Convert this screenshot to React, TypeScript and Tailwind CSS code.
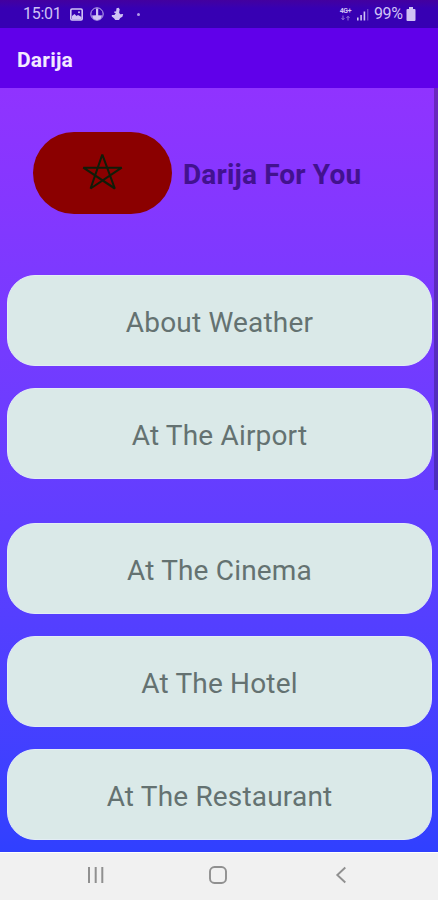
interface TopicButtonProps {
  label: string;
}

const topicGroups = [
  ['About Weather', 'At The Airport'],
  ['At The Cinema', 'At The Hotel', 'At The Restaurant'],
];

function StatusBar() {
  return (
    <div className="flex h-[28px] items-center bg-gradient-to-b from-[#43009f] to-[#3700b3] to-30% pl-[23px] pr-[22px] text-[#cfc2f4]">
      <span className="w-[38px] whitespace-nowrap text-[16px] leading-none tracking-[-0.3px]">15:01</span>
      {/* Notification icons */}
      <svg className="ml-[9px] h-[13px] w-[13px]" viewBox="0 0 13 13" fill="none">
        <rect x="0.8" y="1" width="11.4" height="11" rx="1.2" stroke="currentColor" strokeWidth="1.6" />
        <path d="M2 11.5V8l2.5-2 2 2L8 7l3.5 2v2.5z" fill="currentColor" />
        <circle cx="9" cy="4.2" r="1" fill="currentColor" />
      </svg>
      <svg className="ml-[7px] h-[14px] w-[14px]" viewBox="0 0 14 14" fill="none">
        <circle cx="7" cy="7" r="6.2" stroke="currentColor" strokeWidth="0.9" />
        <path d="M6 1.5h2.2v6.8l4 .3L10.5 12 7 13.2 3.5 12 1.8 8.6l4.2-.3z" fill="currentColor" />
      </svg>
      <svg className="ml-[7px] h-[14px] w-[13px]" viewBox="0 0 13 14" fill="currentColor">
        <path d="M5.5 1.2 7.6.7l1.1 1.5-.6 3.5 1.1 1.6 3-.3-.8 2.8-2.2 1.2L8 13H4.3L3 11.2.8 9.4V8h2.6l1.4-1.7-1.8-.8.7-1.3 1.4.2z" />
      </svg>
      <span className="ml-[13px] h-[3px] w-[3px] rounded-full bg-current opacity-80" />

      {/* Network, signal and battery */}
      <div className="ml-auto flex items-center">
        <div className="flex w-[13px] flex-col items-center">
          <span className="text-[7px] font-bold leading-[7px] tracking-[-0.3px]">4G+</span>
          <svg className="h-[6px] w-[9px] opacity-60" viewBox="0 0 9 6" fill="none" stroke="currentColor">
            <path d="M2 .5v4M.5 3 2 4.8 3.5 3M7 5.5v-4M5.5 3 7 1.2 8.5 3" />
          </svg>
        </div>
        <svg className="ml-[5px] h-[13px] w-[12px]" viewBox="0 0 12 13" fill="currentColor">
          <rect x="0" y="9.5" width="1.6" height="3" />
          <rect x="3.3" y="7" width="1.6" height="5.5" />
          <rect x="6.6" y="3.5" width="1.6" height="9" />
          <rect x="10" y="1" width="1.4" height="11.5" opacity="0.35" />
        </svg>
        <span className="ml-[5px] w-[29px] whitespace-nowrap text-[16px] leading-none tracking-[-0.4px]">99%</span>
        <svg className="ml-[3px] h-[14px] w-[10px]" viewBox="0 0 10 14" fill="currentColor">
          <path d="M3 0h4v2h1.5a1 1 0 0 1 1 1v10a1 1 0 0 1-1 1h-7a1 1 0 0 1-1-1V3a1 1 0 0 1 1-1H3z" />
        </svg>
      </div>
    </div>
  );
}

function Banner() {
  return (
    <div className="flex items-center gap-[11px] pl-[26px]">
      <div className="flex h-[82px] w-[139px] items-center justify-center rounded-full bg-[#8b0000]">
        <svg className="h-[42px] w-[44px]" viewBox="0 0 44 42" fill="none" stroke="#101c08" strokeWidth="2.1" strokeLinejoin="bevel">
          <path d="M21.3 2.5 33.8 36.5 2.3 15.7h38.4L9.6 36.5z" />
        </svg>
      </div>
      <h2 className="whitespace-nowrap pt-[3px] text-[28px] font-bold leading-none tracking-[0.15px] text-[#42128f]">
        Darija For You
      </h2>
    </div>
  );
}

function TopicButton({ label }: TopicButtonProps) {
  return (
    <button className="h-[91px] w-full rounded-[28px] border border-[#e3edf5] bg-[#dae9e8] pt-[4px] text-[28px] tracking-[0.18px] text-[#647271]">
      {label}
    </button>
  );
}

function NavigationBar() {
  return (
    <nav className="flex h-[48px] items-center border-t border-white bg-[#f1f1f1] pb-[4px] pl-[87px] text-[#909090]">
      <svg className="h-[18px] w-[18px]" viewBox="0 0 18 18" stroke="currentColor" strokeWidth="2">
        <path d="M2 1v16M8.7 1v16M15.3 1v16" />
      </svg>
      <svg className="ml-[104px] h-[18px] w-[18px]" viewBox="0 0 18 18" fill="none" stroke="currentColor" strokeWidth="1.9">
        <rect x="1" y="1" width="16" height="16" rx="4.5" />
      </svg>
      <svg className="ml-[108px] h-[18px] w-[12px]" viewBox="0 0 12 18" fill="none" stroke="currentColor" strokeWidth="1.9">
        <path d="M10.3 1.5 2.3 9l8 7.5" />
      </svg>
    </nav>
  );
}

export default function App() {
  return (
    <div className="flex h-[900px] w-[438px] flex-col overflow-hidden font-['Roboto',sans-serif]">
      <StatusBar />
      <header className="flex h-[60px] items-center bg-[#6000ea] pl-[17px] pt-[4px]">
        <h1 className="text-[21px] font-bold leading-none tracking-[0.2px] text-[#f3eaff]">Darija</h1>
      </header>
      <main className="relative flex-1 bg-gradient-to-b from-[#9033ff] to-[#3040ff] pl-[7px] pr-[6px] pt-[44px]">
        <Banner />
        <div className="mt-[61.4px] flex flex-col gap-[44px]">
          {topicGroups.map((group) => (
            <div key={group[0]} className="flex flex-col gap-[22px]">
              {group.map((label) => (
                <TopicButton key={label} label={label} />
              ))}
            </div>
          ))}
        </div>
        {/* Scroll indicator */}
        <div className="absolute right-0 top-0 h-[402px] w-[4px] bg-black/25" />
      </main>
      <NavigationBar />
    </div>
  );
}
